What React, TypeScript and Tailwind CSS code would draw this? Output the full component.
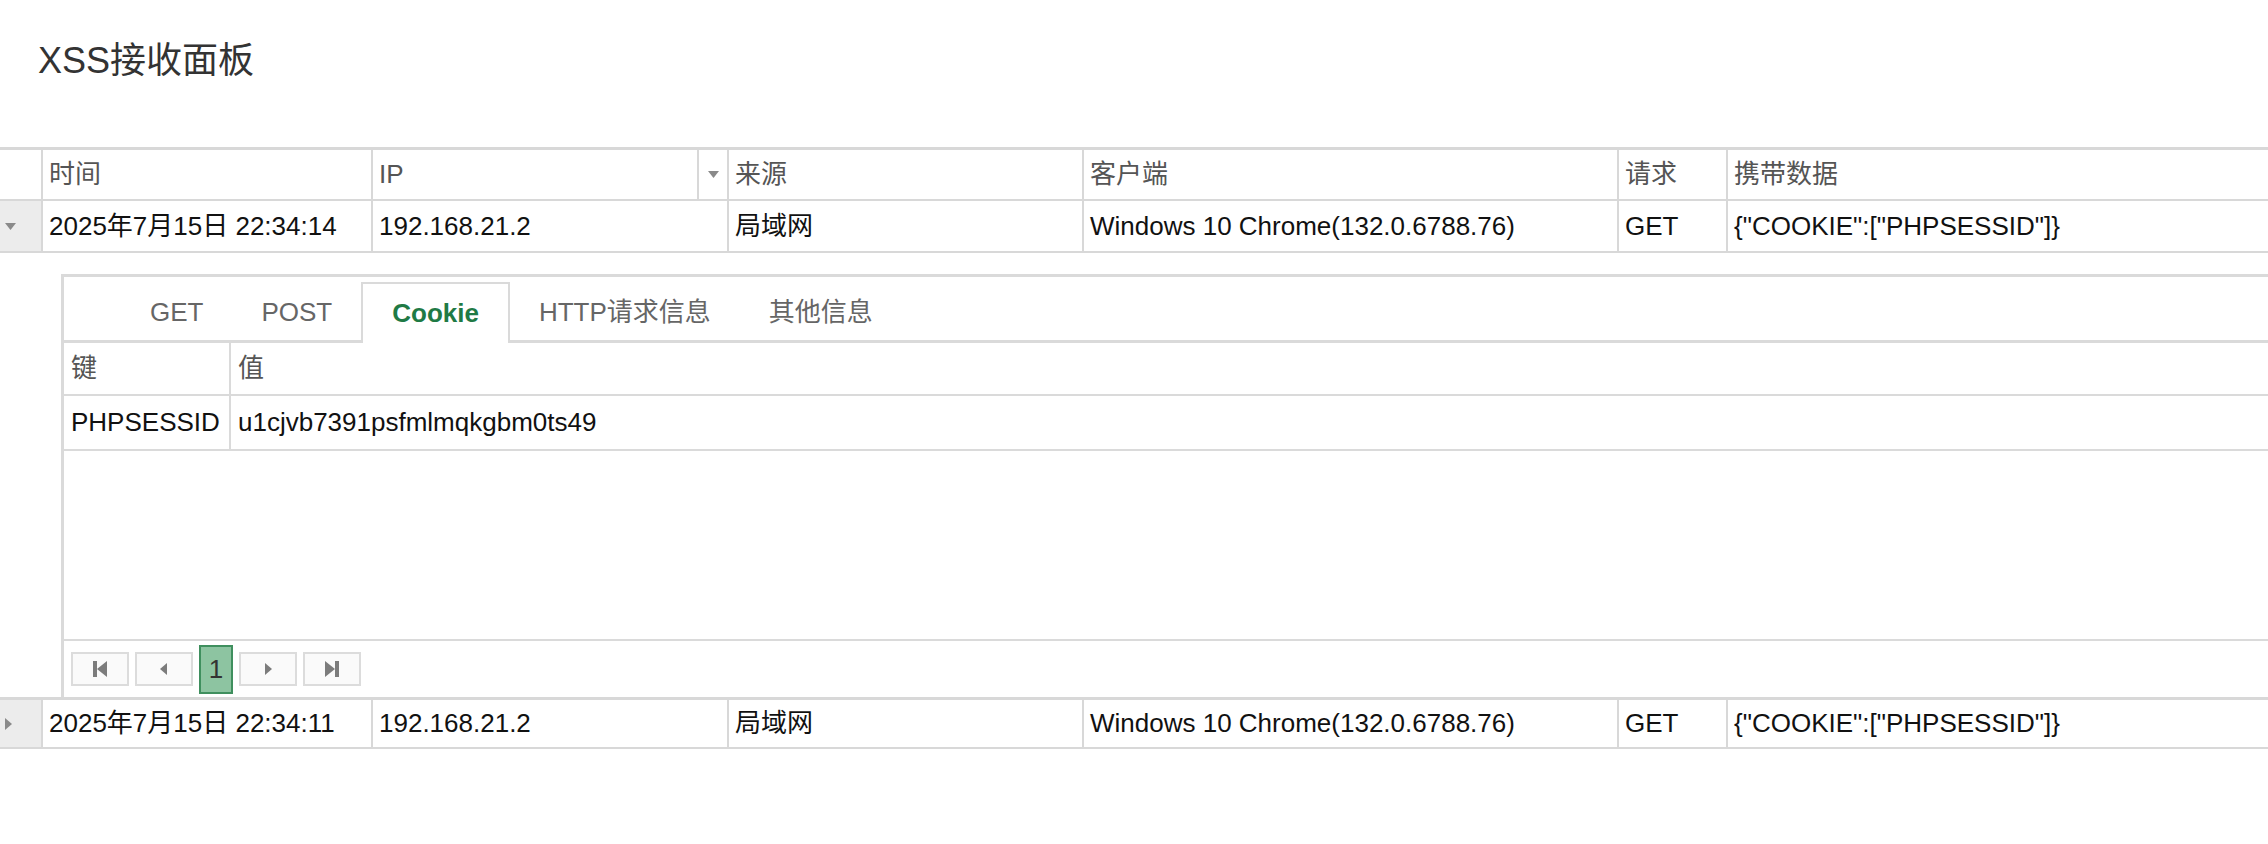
import React, { useState } from 'react';

const font = "font-['Liberation_Sans','Noto_Sans_CJK_SC',sans-serif]";

type Row = {
  time: string;
  ip: string;
  source: string;
  client: string;
  method: string;
  data: string;
};

const rows: Row[] = [
  {
    time: '2025年7月15日 22:34:14',
    ip: '192.168.21.2',
    source: '局域网',
    client: 'Windows 10 Chrome(132.0.6788.76)',
    method: 'GET',
    data: '{"COOKIE":["PHPSESSID"]}',
  },
  {
    time: '2025年7月15日 22:34:11',
    ip: '192.168.21.2',
    source: '局域网',
    client: 'Windows 10 Chrome(132.0.6788.76)',
    method: 'GET',
    data: '{"COOKIE":["PHPSESSID"]}',
  },
];

const tabs = ['GET', 'POST', 'Cookie', 'HTTP请求信息', '其他信息'];

const Caret: React.FC<{ dir: 'down' | 'right' }> = ({ dir }) =>
  dir === 'down' ? (
    <svg width="11" height="7" viewBox="0 0 11 7">
      <path d="M0 0h11L5.5 7z" fill="#8a8a8a" />
    </svg>
  ) : (
    <svg width="7" height="12" viewBox="0 0 7 12">
      <path d="M0 0v12l7-6z" fill="#8a8a8a" />
    </svg>
  );

const PagerIcon: React.FC<{ kind: 'first' | 'prev' | 'next' | 'last' }> = ({ kind }) => (
  <svg width="16" height="18" viewBox="0 0 16 18">
    {kind === 'first' && (
      <>
        <rect x="1" y="1" width="4" height="16" fill="#7c7c7c" />
        <path d="M15 1v16L5 9z" fill="#7c7c7c" />
      </>
    )}
    {kind === 'prev' && <path d="M11 3v12L4 9z" fill="#7c7c7c" />}
    {kind === 'next' && <path d="M5 3v12l7-6z" fill="#7c7c7c" />}
    {kind === 'last' && (
      <>
        <path d="M1 1v16l10-8z" fill="#7c7c7c" />
        <rect x="11" y="1" width="4" height="16" fill="#7c7c7c" />
      </>
    )}
  </svg>
);

const cols = 'grid grid-cols-[41px_330px_356px_355px_535px_109px_1fr]';
const cell = 'border-l-2 border-[#d8d8d8] pl-[6px] flex items-center whitespace-nowrap overflow-hidden';
const pagerBtn = 'w-[58px] h-[34px] bg-[#fafafa] border-2 border-[#dcdcdc] flex items-center justify-center';

const DataRow: React.FC<{ row: Row; open: boolean; onToggle: () => void; top?: boolean }> = ({
  row,
  open,
  onToggle,
  top,
}) => (
  <div
    className={`${cols} h-[52px] border-b-2 border-[#d8d8d8] text-[26px] text-[#111] ${
      top ? 'border-t-[3px]' : ''
    }`}
  >
    <button onClick={onToggle} className="bg-[#ececec] flex items-center pl-[5px]">
      <Caret dir={open ? 'down' : 'right'} />
    </button>
    <div className={cell}>{row.time}</div>
    <div className={cell}>{row.ip}</div>
    <div className={cell}>{row.source}</div>
    <div className={cell}>{row.client}</div>
    <div className={cell}>{row.method}</div>
    <div className={cell}>{row.data}</div>
  </div>
);

const Detail: React.FC = () => {
  const [tab, setTab] = useState('Cookie');

  return (
    <div className="pt-[21px] pl-[61px]">
      <div className="border-l-[3px] border-t-[3px] border-[#dadada]">
        {/* tabs */}
        <div className="flex items-end h-[66px] pl-[57px] border-b-[3px] border-[#dadada]">
          {tabs.map((t) => {
            const active = t === tab;
            return (
              <button
                key={t}
                onClick={() => setTab(t)}
                className={`px-[29px] text-[26px] -mb-[3px] ${
                  active
                    ? 'bg-white border-2 border-b-0 border-[#dadada] text-[#1f7a45] font-bold h-[61px]'
                    : 'text-[#666] h-[61px]'
                }`}
              >
                {t}
              </button>
            );
          })}
        </div>

        {/* key/value table */}
        <div className="grid grid-cols-[165px_1fr] text-[26px]">
          <div className="h-[53px] flex items-center pl-[7px] text-[#555] border-b-2 border-[#dadada]">键</div>
          <div className="h-[53px] flex items-center pl-[7px] text-[#555] border-b-2 border-l-2 border-[#dadada]">值</div>
          <div className="h-[55px] flex items-center pl-[7px] text-[#111] border-b-2 border-[#dadada]">PHPSESSID</div>
          <div className="h-[55px] flex items-center pl-[7px] text-[#111] border-b-2 border-l-2 border-[#dadada]">
            u1cjvb7391psfmlmqkgbm0ts49
          </div>
        </div>
        <div className="h-[190px] border-b-2 border-[#dadada]" />

        {/* pager */}
        <div className="h-[56px] flex items-center gap-[6px] pl-[7px]">
          <button className={pagerBtn}>
            <PagerIcon kind="first" />
          </button>
          <button className={pagerBtn}>
            <PagerIcon kind="prev" />
          </button>
          <button className="w-[34px] h-[49px] bg-[#8dc4a1] border-2 border-[#3f8f5e] text-[26px] text-[#333] flex items-center justify-center">
            1
          </button>
          <button className={pagerBtn}>
            <PagerIcon kind="next" />
          </button>
          <button className={pagerBtn}>
            <PagerIcon kind="last" />
          </button>
        </div>
      </div>
    </div>
  );
};

const App: React.FC = () => {
  const [openIndex, setOpenIndex] = useState<number | null>(0);

  return (
    <div className={`${font} min-h-[844px] w-full overflow-hidden bg-white`}>
      <h1 className="pl-[38px] pt-[39px] h-[147px] text-[36px] leading-[44px] text-[#333] font-normal">
        XSS接收面板
      </h1>

      {/* header */}
      <div className={`${cols} h-[54px] border-t-[3px] border-b-2 border-[#d8d8d8] text-[26px] text-[#555]`}>
        <div />
        <div className={cell}>时间</div>
        <div className="border-l-2 border-[#d8d8d8] flex">
          <div className="flex-1 pl-[6px] flex items-center">IP</div>
          <div className="w-[30px] border-l-2 border-[#d8d8d8] flex items-center justify-center">
            <Caret dir="down" />
          </div>
        </div>
        <div className={cell}>来源</div>
        <div className={cell}>客户端</div>
        <div className={cell}>请求</div>
        <div className={cell}>携带数据</div>
      </div>

      {rows.map((row, i) => (
        <React.Fragment key={row.time}>
          <DataRow
            row={row}
            open={openIndex === i}
            top={i > 0}
            onToggle={() => setOpenIndex(openIndex === i ? null : i)}
          />
          {openIndex === i && <Detail />}
        </React.Fragment>
      ))}
    </div>
  );
};

export default App;
